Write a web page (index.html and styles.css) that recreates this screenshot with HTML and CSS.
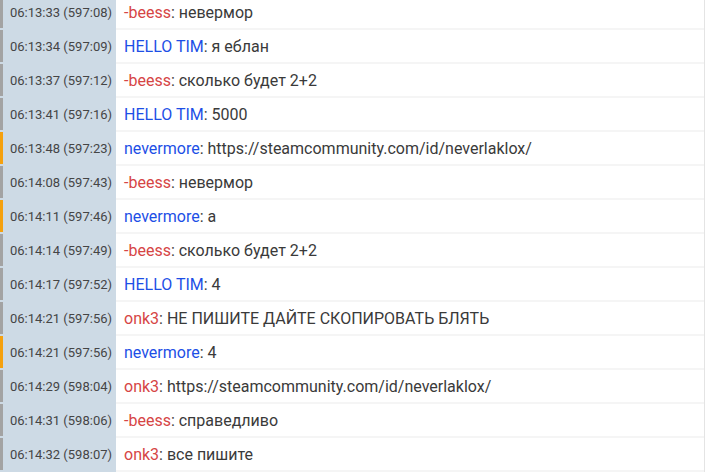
FILE: index.html
```html
<!DOCTYPE html>
<html>
<head>
    <meta charset="utf-8">
    <title>chat log</title>
    <link rel="stylesheet" href="styles.css">
</head>
<body>
<div id="log">
    <div class="row"><div class="time">06:13:33 (597:08)</div><div class="msg"><span class="nick red">-beess</span>: невермор</div></div>
    <div class="row"><div class="time">06:13:34 (597:09)</div><div class="msg"><span class="nick blue">HELLO TIM</span>: я еблан</div></div>
    <div class="row"><div class="time">06:13:37 (597:12)</div><div class="msg"><span class="nick red">-beess</span>: сколько будет 2+2</div></div>
    <div class="row"><div class="time">06:13:41 (597:16)</div><div class="msg"><span class="nick blue">HELLO TIM</span>: 5000</div></div>
    <div class="row mark"><div class="time">06:13:48 (597:23)</div><div class="msg"><span class="nick blue">nevermore</span>: https://steamcommunity.com/id/neverlaklox/</div></div>
    <div class="row"><div class="time">06:14:08 (597:43)</div><div class="msg"><span class="nick red">-beess</span>: невермор</div></div>
    <div class="row mark"><div class="time">06:14:11 (597:46)</div><div class="msg"><span class="nick blue">nevermore</span>: а</div></div>
    <div class="row"><div class="time">06:14:14 (597:49)</div><div class="msg"><span class="nick red">-beess</span>: сколько будет 2+2</div></div>
    <div class="row"><div class="time">06:14:17 (597:52)</div><div class="msg"><span class="nick blue">HELLO TIM</span>: 4</div></div>
    <div class="row"><div class="time">06:14:21 (597:56)</div><div class="msg"><span class="nick red">onk3</span>: НЕ ПИШИТЕ ДАЙТЕ СКОПИРОВАТЬ БЛЯТЬ</div></div>
    <div class="row mark"><div class="time">06:14:21 (597:56)</div><div class="msg"><span class="nick blue">nevermore</span>: 4</div></div>
    <div class="row"><div class="time">06:14:29 (598:04)</div><div class="msg"><span class="nick red">onk3</span>: https://steamcommunity.com/id/neverlaklox/</div></div>
    <div class="row"><div class="time">06:14:31 (598:06)</div><div class="msg"><span class="nick red">-beess</span>: справедливо</div></div>
    <div class="row"><div class="time">06:14:32 (598:07)</div><div class="msg"><span class="nick red">onk3</span>: все пишите</div></div>
</div>
</body>
</html>
```
FILE: styles.css
```css
body {
    margin: 0;
    background: white;
    font-family: Roboto, "Noto Sans", sans-serif;
    overflow: hidden;
}

#log {
    margin-top: -4px;
    width: 704px;
    border-right: 1px solid #e4e4e4;
}

.row {
    display: flex;
    height: 32px;
    border-bottom: 2px solid #f5f5f5;
}

.time {
    width: 106px;
    flex-shrink: 0;
    display: flex;
    align-items: center;
    padding-left: 7px;
    border-left: 3px solid #a3a3a3;
    background: #cddae5;
    color: #454545;
    font-size: 13px;
    box-shadow: 0 2px 0 #cddae5;
}

.row.mark .time {
    border-left-color: #f5a10f;
}

.msg {
    display: flex;
    align-items: center;
    padding-left: 8px;
    color: #3a3a3a;
    font-size: 16px;
    white-space: pre;
}

.nick.red {
    color: #d64545;
}

.nick.blue {
    color: #1d4fe6;
}
```
